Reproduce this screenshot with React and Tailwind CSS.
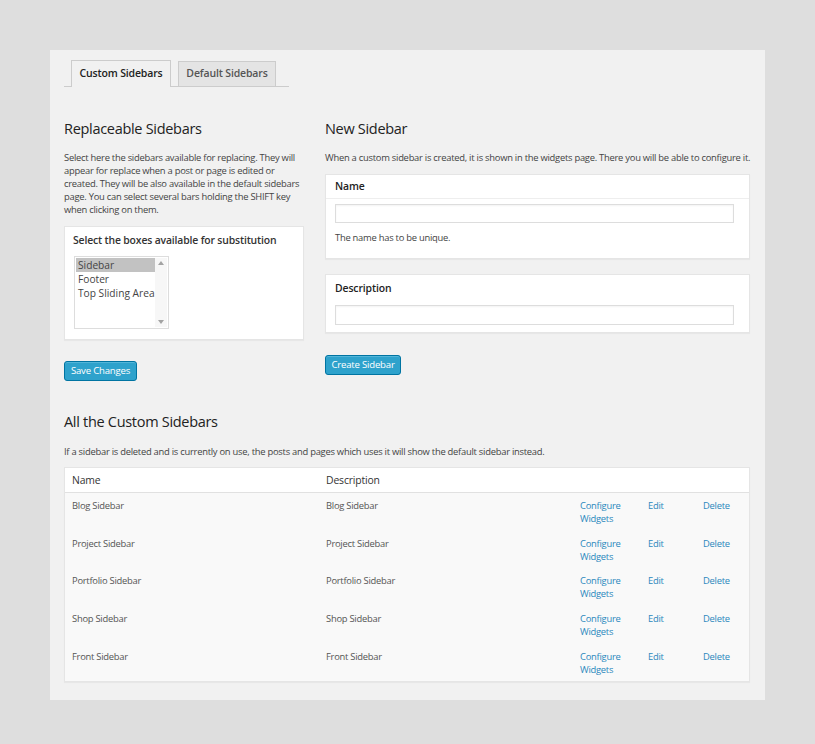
import React from "react";

const rows = ["Blog Sidebar", "Project Sidebar", "Portfolio Sidebar", "Shop Sidebar", "Front Sidebar"];

const body = "text-[9.4px] leading-[13px] tracking-[-0.25px] text-[#444]";
const heading = "text-[14.5px] leading-[18px] tracking-[-0.3px] text-[#222]";

function Btn({ children, w }) {
  return (
    <div className="flex">
      <button
        className={`h-[20px] ${w} rounded-[3px] border border-[#0074a2] bg-[#2ea2cc] text-[9.6px] leading-[18px] tracking-[-0.2px] text-white shadow-[inset_0_1px_0_rgba(120,200,230,0.5)]`}
      >
        {children}
      </button>
    </div>
  );
}

export default function App() {
  return (
    <div
      className="min-h-[744px] w-full bg-[#dedede] pt-[50px] pl-[50px]"
      style={{ fontFamily: '"Open Sans", "Liberation Sans", sans-serif' }}
    >
      <div className="h-[650px] w-[715px] bg-[#f1f1f1] pl-[14px] pr-[15px] pt-[10px]">
        {/* Tabs */}
        <div className="flex w-[225px] gap-[7px] border-b border-[#cccccc] pl-[7px]">
          <div className="-mb-px flex h-[27px] w-[100px] items-center justify-center border border-b-0 border-[#cccccc] bg-[#f1f1f1] text-[10.5px] font-semibold tracking-[-0.15px] text-[#222]">
            Custom Sidebars
          </div>
          <div className="mt-[1px] flex h-[25px] w-[98px] items-center justify-center border border-b-0 border-[#cccccc] bg-[#e4e4e4] text-[10.5px] font-semibold tracking-[-0.15px] text-[#555]">
            Default Sidebars
          </div>
        </div>

        <div className="mt-[33px] flex gap-[21px]">
          {/* Left column */}
          <div className="w-[240px]">
            <h2 className={heading}>Replaceable Sidebars</h2>
            <p className={`mt-[13px] ${body}`}>
              Select here the sidebars available for replacing. They will appear for replace when a post or page is edited or created. They will be also available in the default sidebars page. You can select several bars holding the SHIFT key when clicking on them.
            </p>
            <div className="mt-[10px] h-[114px] border border-[#e5e5e5] bg-white px-[8px] pt-[6px] shadow-[0_1px_1px_rgba(0,0,0,0.04)]">
              <div className="text-[10.4px] font-semibold leading-[14px] tracking-[-0.15px] text-[#333]">
                Select the boxes available for substitution
              </div>
              <div className="mt-[9px] ml-[1px] flex h-[73px] w-[95px] border border-[#dddddd] bg-white p-[1px]">
                <div className="flex-1 text-[10.2px] leading-[14px] text-[#444]">
                  <div className="bg-[#c2c2c2] pl-[2px]">Sidebar</div>
                  <div className="pl-[2px]">Footer</div>
                  <div className="whitespace-nowrap pl-[2px]">Top Sliding Area</div>
                </div>
                <div className="flex w-[12px] flex-col items-center justify-between bg-[#f7f7f7] py-[3px]">
                  <svg width="6" height="4" viewBox="0 0 6 4"><path d="M0 4 L3 0 L6 4 Z" fill="#a3a3a3" /></svg>
                  <svg width="6" height="4" viewBox="0 0 6 4"><path d="M0 0 L3 4 L6 0 Z" fill="#a3a3a3" /></svg>
                </div>
              </div>
            </div>
            <div className="mt-[21px]">
              <Btn w="w-[73px]">Save Changes</Btn>
            </div>
          </div>

          {/* Right column */}
          <div className="w-[425px]">
            <h2 className={heading}>New Sidebar</h2>
            <p className={`mt-[13px] whitespace-nowrap ${body}`}>
              When a custom sidebar is created, it is shown in the widgets page. There you will be able to configure it.
            </p>
            <div className="mt-[10px] h-[85px] border border-[#e5e5e5] bg-white shadow-[0_1px_1px_rgba(0,0,0,0.04)]">
              <div className="flex h-[24px] items-center border-b border-[#eeeeee] px-[9px] text-[10.4px] font-semibold tracking-[-0.1px] text-[#222]">
                Name
              </div>
              <div className="px-[9px] pt-[5px]">
                <div className="h-[19px] w-[399px] border border-[#dddddd] bg-white shadow-[inset_0_1px_2px_rgba(0,0,0,0.05)]" />
                <div className={`mt-[8px] ${body}`}>The name has to be unique.</div>
              </div>
            </div>
            <div className="mt-[15px] h-[59px] border border-[#e5e5e5] bg-white px-[9px] pt-[6px] shadow-[0_1px_1px_rgba(0,0,0,0.04)]">
              <div className="text-[10.4px] font-semibold leading-[14px] tracking-[-0.1px] text-[#222]">Description</div>
              <div className="mt-[10px] h-[20px] w-[399px] border border-[#dddddd] bg-white shadow-[inset_0_1px_2px_rgba(0,0,0,0.05)]" />
            </div>
            <div className="mt-[22px]">
              <Btn w="w-[76px]">Create Sidebar</Btn>
            </div>
          </div>
        </div>

        {/* All custom sidebars */}
        <h2 className={`mt-[32px] ${heading}`}>All the Custom Sidebars</h2>
        <p className={`mt-[14px] ${body}`}>
          If a sidebar is deleted and is currently on use, the posts and pages which uses it will show the default sidebar instead.
        </p>
        <div className="mt-[9px] w-[686px] border border-[#e5e5e5] bg-[#f9f9f9] shadow-[0_1px_1px_rgba(0,0,0,0.04)]">
          <div className="grid h-[25px] grid-cols-[254px_254px_68px_55px_1fr] items-center border-b border-[#e1e1e1] bg-white pl-[7px] pt-[2px] text-[10.4px] tracking-[-0.15px] text-[#333]">
            <div>Name</div>
            <div>Description</div>
            <div />
            <div />
            <div />
          </div>
          {rows.map((r) => (
            <div
              key={r}
              className="grid h-[37.7px] grid-cols-[254px_254px_68px_55px_1fr] pl-[7px] pt-[6px] text-[9.4px] leading-[13px] tracking-[-0.25px] text-[#555]"
            >
              <div>{r}</div>
              <div>{r}</div>
              <div className="text-[#2b88bd]">
                Configure
                <br />
                Widgets
              </div>
              <div className="text-[#2b88bd]">Edit</div>
              <div className="text-[#2b88bd]">Delete</div>
            </div>
          ))}
        </div>
      </div>
    </div>
  );
}
